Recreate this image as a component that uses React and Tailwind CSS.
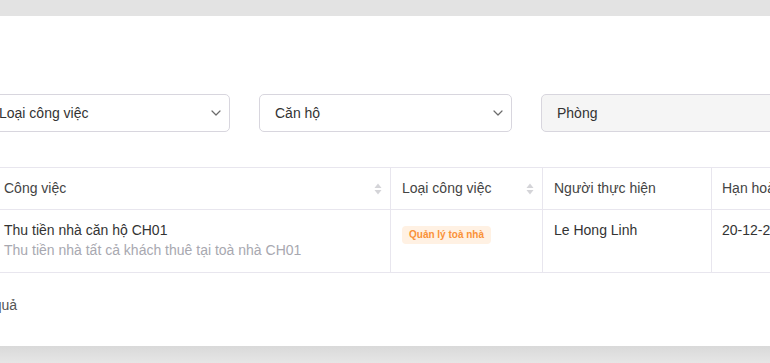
import React from "react";

function Chevron() {
  return (
    <svg width="10" height="6" viewBox="0 0 10 6" fill="none" className="shrink-0">
      <path d="M1 1l4 4 4-4" stroke="#6b6b6b" strokeWidth="1.2" strokeLinecap="round" strokeLinejoin="round" />
    </svg>
  );
}

function Sort() {
  return (
    <svg width="8" height="12" viewBox="0 0 8 12" className="shrink-0">
      <path d="M4 0.5L7.5 5H0.5z" fill="#d4d4d8" />
      <path d="M4 11.5L7.5 7H0.5z" fill="#d4d4d8" />
    </svg>
  );
}

export default function App() {
  return (
    <div
      className="w-[770px] h-[363px] overflow-hidden bg-[#e4e4e4] flex flex-col"
      style={{ fontFamily: '"Liberation Sans", Arial, sans-serif' }}
    >
      <div className="h-[16px] shrink-0 bg-[#e3e3e3]" />
      <div className="h-[330px] shrink-0 bg-white overflow-hidden pt-[78px]">
        {/* Filters */}
        <div className="flex gap-[29px] ml-[-17px] h-[38px] text-[14px] text-[#333]">
          <div className="w-[247px] shrink-0 h-full border border-[#d8d6de] rounded-[5px] flex items-center justify-between pl-[15px] pr-[8px]">
            <span>Loại công việc</span>
            <Chevron />
          </div>
          <div className="w-[253px] shrink-0 h-full border border-[#d8d6de] rounded-[5px] flex items-center justify-between pl-[15px] pr-[8px]">
            <span>Căn hộ</span>
            <Chevron />
          </div>
          <div className="w-[300px] shrink-0 h-full border border-[#d8d6de] bg-[#f5f5f5] rounded-[5px] flex items-center pl-[15px]">
            <span>Phòng</span>
          </div>
        </div>

        {/* Table */}
        <div className="mt-[35px] ml-[-8px] w-[900px] text-[14px]">
          <div className="flex h-[43px] border-t border-b border-[#e8e6ee] text-[#444]">
            <div className="w-[399px] shrink-0 border-r border-[#e8e6ee] flex items-center justify-between pl-[12px] pr-[8px]">
              <span>Công việc</span>
              <Sort />
            </div>
            <div className="w-[152px] shrink-0 border-r border-[#e8e6ee] flex items-center justify-between pl-[11px] pr-[8px]">
              <span>Loại công việc</span>
              <Sort />
            </div>
            <div className="w-[169px] shrink-0 border-r border-[#e8e6ee] flex items-center pl-[11px]">
              <span>Người thực hiện</span>
            </div>
            <div className="flex-1 flex items-center pl-[10px]">
              <span>Hạn hoàn thành</span>
            </div>
          </div>
          <div className="flex h-[63px] border-b border-[#e8e6ee]">
            <div className="w-[399px] shrink-0 border-r border-[#e8e6ee] pl-[12px] pt-[10px] leading-[20px]">
              <div className="text-[#333]">Thu tiền nhà căn hộ CH01</div>
              <div className="text-[#a8a8b0]">Thu tiền nhà tất cả khách thuê tại toà nhà CH01</div>
            </div>
            <div className="w-[152px] shrink-0 border-r border-[#e8e6ee] pl-[11px] pt-[13px]">
              <span className="inline-flex items-center h-[18px] px-[7px] rounded-[4px] bg-[#fff1e3] text-[#fa9238] text-[10px] font-bold">
                Quản lý toà nhà
              </span>
            </div>
            <div className="w-[169px] shrink-0 border-r border-[#e8e6ee] pl-[11px] pt-[10px] leading-[20px] text-[#333]">
              Le Hong Linh
            </div>
            <div className="flex-1 pl-[10px] pt-[10px] leading-[20px] text-[#333]">20-12-2023</div>
          </div>
        </div>

        {/* Footer */}
        <div className="mt-[22px] ml-[-183px] w-[200px] text-right text-[14px] leading-[20px] text-[#555] whitespace-nowrap">
          Tổng 1 kết quả
        </div>
      </div>
      <div className="flex-1 bg-gradient-to-b from-[#d9d9d9] to-[#e6e6e6]" />
    </div>
  );
}
